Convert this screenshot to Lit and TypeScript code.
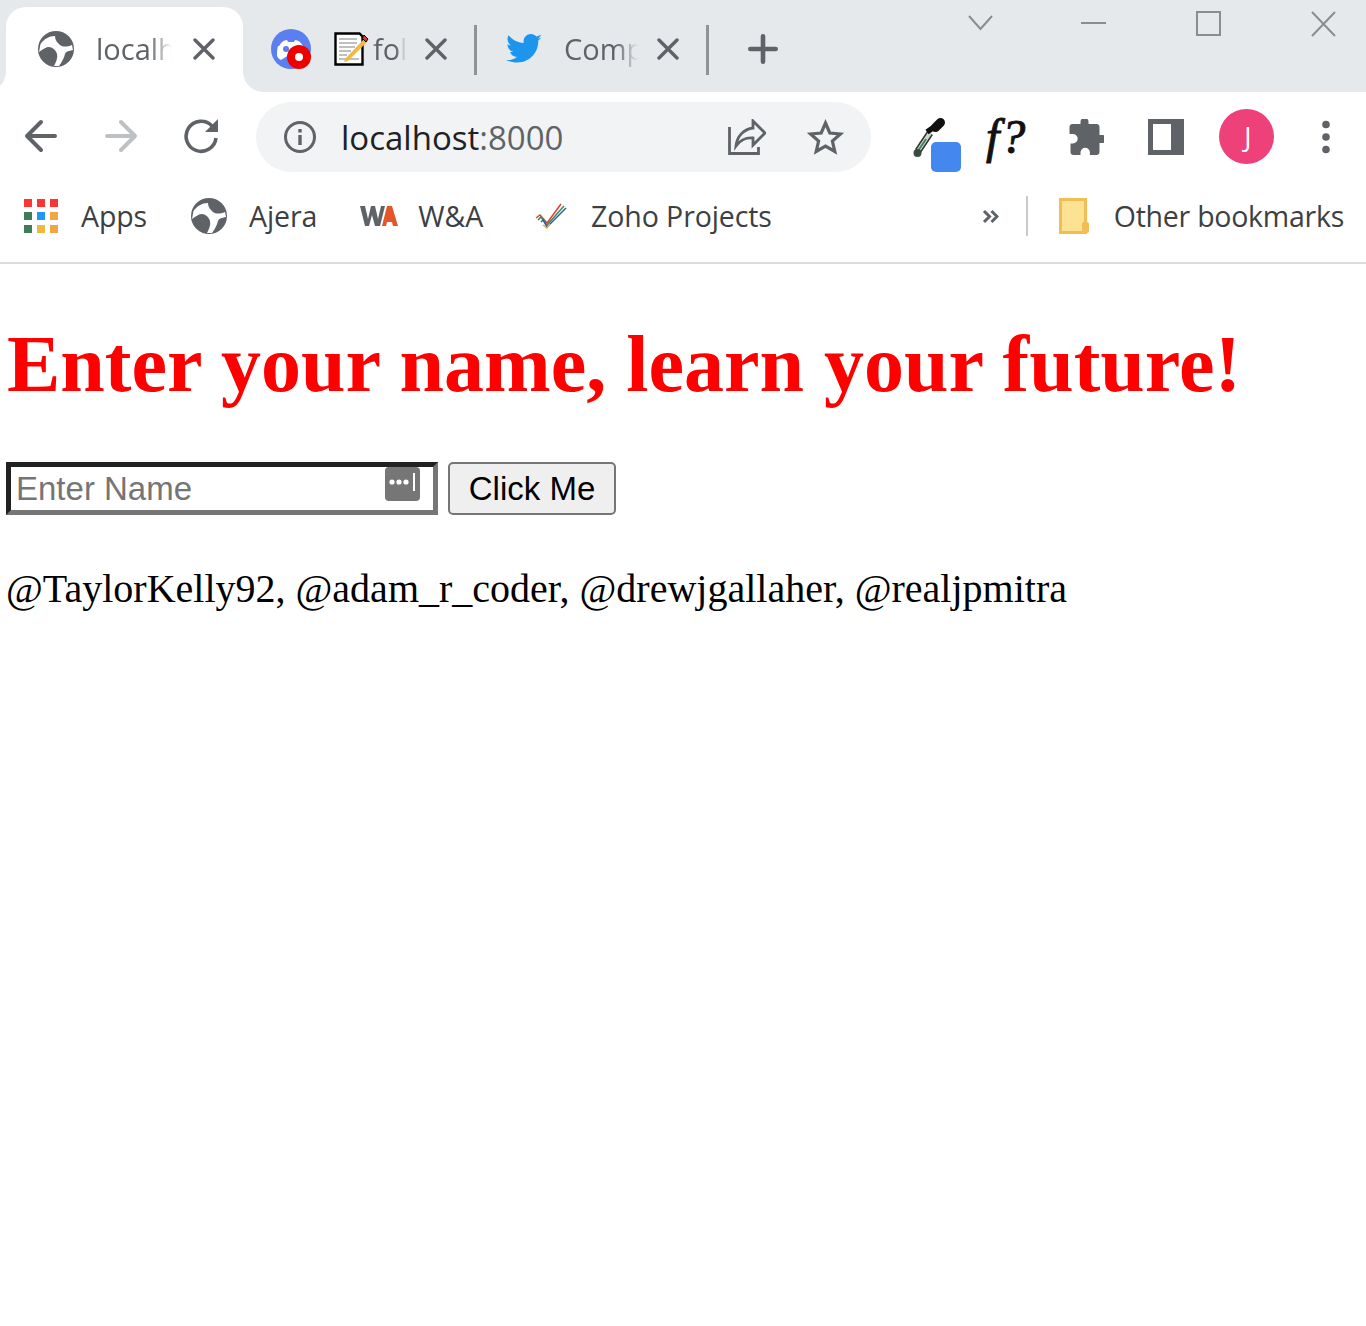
import { LitElement, css, html } from "lit";
import { customElement } from "lit/decorators.js";

const globe = html`<svg class="ico" width="36" height="36" viewBox="0 0 36 36">
  <circle cx="18" cy="18" r="18" fill="#5f6368" />
  <path fill="#fff" d="M2.500 13C6 8 11 5 17 5c0 4 2 6 5 9 3 2 7 2 12 0l1 5c-4 1-7 1-8 4-1 4-3 8-6 12h-5c2-4 4-8 3-12-1-4-5-7-8-7s-6 2-10 5z" />
</svg>`;

const closeX = html`<svg class="ico" width="22" height="22" viewBox="0 0 22 22">
  <path d="M2 2l18 18M20 2L2 20" stroke="#5f6368" stroke-width="3.4" stroke-linecap="round" />
</svg>`;

const appColors = ["#f33", "#f33", "#f33", "#3f7d58", "#2196f3", "#efa83f", "#3f7d58", "#efb93f", "#efa83f"];

@customElement("app-root")
export class AppRoot extends LitElement {
  static styles = css`
    :host {
      display: block;
      font-family: "Open Sans", "Noto Sans", sans-serif;
    }
    .ico {
      display: block;
      flex: none;
    }

    .tabstrip {
      display: flex;
      height: 92px;
      background: #e6e9ec;
      padding: 7px 0 0 6px;
      box-sizing: border-box;
    }
    .tab {
      display: flex;
      align-items: center;
      height: 85px;
      padding-bottom: 1px;
      box-sizing: border-box;
      font-size: 29px;
      color: #5f6368;
    }
    .tab.active {
      position: relative;
      width: 237px;
      padding-left: 32px;
      background: #fff;
      border-radius: 20px 20px 0 0;
    }
    .tab.active::before,
    .tab.active::after {
      content: "";
      position: absolute;
      bottom: 0;
      width: 20px;
      height: 20px;
    }
    .tab.active::before {
      left: -20px;
      background: radial-gradient(circle at 0 0, transparent 19.5px, #fff 20px);
    }
    .tab.active::after {
      right: -20px;
      background: radial-gradient(circle at 100% 0, transparent 19.5px, #fff 20px);
    }
    .title {
      overflow: hidden;
      white-space: nowrap;
      -webkit-mask-image: linear-gradient(to right, #000 70%, transparent);
      mask-image: linear-gradient(to right, #000 70%, transparent);
    }
    .tab.active .title {
      width: 76px;
      margin: -2px 21px 0 22px;
    }
    .tab.second {
      width: 231px;
      padding-left: 28px;
    }
    .tab.second .title {
      width: 33px;
      margin: -2px 19px 0 3px;
    }
    .tab.second .note {
      margin-left: 23px;
    }
    .sep {
      width: 3px;
      height: 50px;
      margin-top: 18px;
      background: #909396;
      flex: none;
    }
    .tab.third {
      width: 229px;
      padding-left: 29px;
    }
    .tab.third .title {
      width: 74px;
      margin: -2px 19px 0 22px;
    }
    .plus {
      margin: 27px 0 0 39px;
    }
    .winctl {
      display: flex;
      gap: 90px;
      margin: -3px 0 0 auto;
      padding-right: 30px;
      align-items: flex-start;
    }
    .winctl .chev {
      margin-right: -2px;
    }

    .toolbar {
      display: flex;
      align-items: center;
      height: 90px;
      padding-left: 23px;
      box-sizing: border-box;
    }
    .toolbar .nav {
      display: flex;
      gap: 44px;
      align-items: center;
      margin-top: -2px;
    }
    .omnibox {
      display: flex;
      align-items: center;
      width: 615px;
      height: 70px;
      margin-left: 37px;
      padding: 0 27px 0 28px;
      box-sizing: border-box;
      border-radius: 35px;
      background: #f1f3f4;
      flex: none;
    }
    .url {
      margin-left: 25px;
      font-size: 33px;
      color: #202124;
      flex: 1;
    }
    .url span {
      color: #5f6368;
    }
    .omni-icons {
      display: flex;
      gap: 41px;
      align-items: center;
    }
    .ext {
      display: flex;
      align-items: center;
      margin: -1px 0 0 42px;
    }
    .dropper {
      margin-top: 16px;
    }
    .fn {
      width: 44px;
      margin-left: 25px;
      font: italic 400 48px/1 "Liberation Serif", serif;
      letter-spacing: 2px;
      -webkit-text-stroke: 1px #111;
      color: #111;
      white-space: nowrap;
    }
    .puzzle {
      margin-left: 38px;
    }
    .panel {
      margin-left: 44px;
    }
    .avatar {
      width: 55px;
      height: 55px;
      margin-left: 35px;
      border-radius: 50%;
      background: #ee417a;
      color: #fff;
      font-size: 27px;
      text-indent: 3px;
      display: flex;
      align-items: center;
      justify-content: center;
    }
    .dots {
      margin-left: 47px;
    }

    .bookmarks {
      display: flex;
      align-items: center;
      height: 82px;
      padding: 0 0 12px 24px;
      box-sizing: border-box;
      border-bottom: 2px solid #dadce0;
      font-size: 28.5px;
      letter-spacing: -0.1px;
      color: #3c4043;
    }
    .bm {
      display: flex;
      align-items: center;
      white-space: nowrap;
    }
    .bm span {
      margin: -1px 0 0 24px;
    }
    .bm.apps-link span {
      margin-left: 23px;
    }
    .bm.ajera {
      margin-left: 44px;
    }
    .bm.ajera span {
      margin-left: 22px;
    }
    .bm.wa {
      margin-left: 42px;
    }
    .bm.wa span {
      margin-left: 19px;
    }
    .bm.zoho {
      margin-left: 52px;
    }
    .apps {
      display: grid;
      grid-template-columns: repeat(3, 8px);
      gap: 5px;
    }
    .apps i {
      display: block;
      width: 8px;
      height: 8px;
    }
    .more {
      margin-left: auto;
      padding-right: 22px;
    }
    .more span {
      margin-left: 25px;
      letter-spacing: -0.25px;
    }
    .bm-sep {
      width: 2px;
      height: 40px;
      margin: 0 31px 0 27px;
      background: #c8cbce;
    }

    .page {
      padding: 0 6px;
      font-family: "Liberation Serif", serif;
    }
    h1 {
      margin: 0;
      padding: 54px 0 0 1px;
      font-size: 80px;
      line-height: 92px;
      font-weight: 700;
      color: #f00;
      white-space: nowrap;
    }
    .form {
      display: flex;
      gap: 10px;
      margin-top: 52px;
      height: 53px;
    }
    .field {
      position: relative;
      width: 432px;
      height: 53px;
      box-sizing: border-box;
      border: 5px solid;
      border-color: #212121 #767676 #767676 #212121;
    }
    input {
      display: block;
      width: 100%;
      height: 100%;
      box-sizing: border-box;
      border: 0;
      outline: 0;
      padding: 0 5px;
      font: 33px "Liberation Sans", Arial, sans-serif;
      background: #fff;
    }
    input::placeholder {
      color: #757575;
      opacity: 1;
    }
    .pw {
      position: absolute;
      top: 0;
      right: 13px;
    }
    button {
      width: 168px;
      height: 53px;
      padding: 0;
      border: 2px solid #767676;
      border-radius: 5px;
      background: #efefef;
      color: #000;
      font: 33px "Liberation Sans", Arial, sans-serif;
    }
    .names {
      margin: 51px 0 0;
      font-size: 40px;
      line-height: 46px;
      color: #000;
      white-space: nowrap;
    }
  `;

  render() {
    return html`
      <div class="tabstrip">
        <div class="tab active">
          ${globe}
          <div class="title">localh</div>
          ${closeX}
        </div>
        <div class="tab second">
          <svg class="ico" width="40" height="40" viewBox="0 0 40 40">
            <circle cx="20" cy="20" r="20" fill="#5b7ff0" />
            <path fill="#fff" d="M8 17c2-4 5-6 8-6l1 2h6l1-2c3 0 6 2 8 6l-22 14c-2-1-3-2-4-4 0-4 0-7 1-10z" />
            <circle cx="15" cy="20" r="3" fill="#5b7ff0" />
            <circle cx="28" cy="28" r="12" fill="#e00" />
            <circle cx="28" cy="28" r="4" fill="#fff" />
          </svg>
          <svg class="ico note" width="36" height="34" viewBox="0 0 36 34">
            <path d="M1.500 1.500h24l3 3v28h-27z" fill="#fff" stroke="#000" stroke-width="2.400" />
            <path d="M5 7h18M5 11h18M5 15h16M5 19h12M5 23h8M5 27h20" stroke="#aaa" stroke-width="1.600" />
            <path d="M11 27l19-20 3 3-19 19-4 1z" fill="#f2b93f" />
            <path d="M30 3l4 4-2 3-4-4z" fill="#d33" stroke="#000" stroke-width="1" />
          </svg>
          <div class="title">fol</div>
          ${closeX}
        </div>
        <div class="sep"></div>
        <div class="tab third">
          <svg class="ico" width="36" height="30" viewBox="0 0 24 20">
            <path fill="#1d95ec" d="M24 2.400c-.9.4-1.800.7-2.800.8 1-.6 1.800-1.600 2.200-2.700-1 .6-2 1-3.100 1.200C19.300.7 18 0 16.600 0c-2.700 0-4.900 2.200-4.900 4.900 0 .4 0 .8.100 1.100C7.700 5.800 4.100 3.900 1.700.9c-.4.700-.7 1.600-.7 2.500 0 1.700.9 3.200 2.200 4.100-.8 0-1.600-.2-2.200-.6v.1c0 2.400 1.700 4.400 3.900 4.800-.4.100-.8.200-1.300.2-.3 0-.6 0-.9-.1.6 2 2.400 3.400 4.600 3.400-1.700 1.300-3.800 2.100-6.100 2.100-.4 0-.8 0-1.200-.1C2.200 18.200 4.800 19 7.500 19c9.100 0 14-7.500 14-14v-.6c1-.7 1.800-1.600 2.500-2z" />
          </svg>
          <div class="title">Comp</div>
          ${closeX}
        </div>
        <div class="sep"></div>
        <svg class="ico plus" width="30" height="30" viewBox="0 0 30 30">
          <path d="M15 2.300v25.400M2.300 15h25.400" stroke="#5f6368" stroke-width="4.600" stroke-linecap="round" />
        </svg>
        <div class="winctl">
          <svg class="ico chev" width="25" height="40" viewBox="0 0 25 40">
            <path d="M1 12l11.500 13L24 12" fill="none" stroke="#8a8c8e" stroke-width="2" />
          </svg>
          <svg class="ico" width="25" height="40" viewBox="0 0 25 40">
            <path d="M0 19h25" stroke="#8a8c8e" stroke-width="2" />
          </svg>
          <svg class="ico" width="25" height="40" viewBox="0 0 25 40">
            <path d="M1 8h23v23H1z" fill="none" stroke="#8a8c8e" stroke-width="2" />
          </svg>
          <svg class="ico" width="25" height="40" viewBox="0 0 25 40">
            <path d="M1 8l23 24M24 8L1 32" fill="none" stroke="#8a8c8e" stroke-width="2" />
          </svg>
        </div>
      </div>

      <div class="toolbar">
        <div class="nav">
          <svg class="ico" width="36" height="36" viewBox="0 0 36 36">
            <path d="M32 18H4M18 4L4 18l14 14" fill="none" stroke="#5f6368" stroke-width="4" stroke-linecap="round" stroke-linejoin="round" />
          </svg>
          <svg class="ico" width="36" height="36" viewBox="0 0 36 36">
            <path d="M4 18h28M18 4l14 14-14 14" fill="none" stroke="#bdc1c4" stroke-width="4" stroke-linecap="round" stroke-linejoin="round" />
          </svg>
          <svg class="ico" width="36" height="36" viewBox="0 0 36 36">
            <path d="M29 8A15 15 0 1 0 33 20" fill="none" stroke="#5f6368" stroke-width="3.600" />
            <path d="M35 1v13H22z" fill="#5f6368" />
          </svg>
        </div>
        <div class="omnibox">
          <svg class="ico" width="32" height="32" viewBox="0 0 32 32">
            <circle cx="16" cy="16" r="14.500" fill="none" stroke="#5f6368" stroke-width="3" />
            <path d="M14.300 14h3.400v10h-3.400zM14.300 8h3.400v3.400h-3.400z" fill="#5f6368" />
          </svg>
          <div class="url">localhost<span>:8000</span></div>
          <div class="omni-icons">
            <svg class="ico" width="38" height="36" viewBox="0 0 38 36">
              <path d="M1.500 8v26.500h29V28" fill="none" stroke="#5f6368" stroke-width="2.800" />
              <path d="M25 2l12 12-12 12v-7c-7-.5-12 1-17 8 1-10 8-17 17-18z" fill="none" stroke="#5f6368" stroke-width="2.800" />
            </svg>
            <svg class="ico" width="37" height="36" viewBox="0 0 37 36">
              <path d="M18.500 4l4.300 10 10.700 1-8.100 7 2.400 10.500-9.300-5.500-9.300 5.500 2.400-10.500-8.100-7 10.700-1z" fill="none" stroke="#5f6368" stroke-width="3.200" />
            </svg>
          </div>
        </div>
        <div class="ext">
          <svg class="ico dropper" width="48" height="54" viewBox="0 0 48 54">
            <path d="M5 33l12-18" stroke="#333" stroke-width="7" />
            <path d="M5 33l12-18" stroke="#cfd6d2" stroke-width="4" />
            <path d="M5 33l8-12" stroke="#3c8a5c" stroke-width="2" />
            <circle cx="4.500" cy="35" r="4" fill="#3a4a42" />
            <path d="M14 14l10-7" stroke="#111" stroke-width="5.500" />
            <path d="M22.500 9.500l5-5" stroke="#111" stroke-width="9" stroke-linecap="round" />
            <rect x="18" y="24" width="30" height="30" rx="5" fill="#4487ef" />
          </svg>
          <div class="fn">f?</div>
          <svg class="ico puzzle" width="36" height="36" viewBox="0 0 36 36">
            <path fill="#5f6368" d="M34.500 16h-3V8c0-1.700-1.300-3-3-3h-8V3a4 4 0 0 0-8 0v2h-8c-1.700 0-3 1.300-3 3v7H5a4.700 4.700 0 0 1 0 9.400H2.500V33c0 1.700 1.300 3 3 3h7v-2.500a4.700 4.700 0 0 1 9.400 0V36h6.600c1.700 0 3-1.300 3-3v-9h3a4 4 0 0 0 0-8z" />
          </svg>
          <svg class="ico panel" width="36" height="36" viewBox="0 0 36 36">
            <path fill-rule="evenodd" fill="#5f6368" d="M0 0h36v36H0zM5 5v26h18V5z" />
          </svg>
          <div class="avatar">J</div>
          <svg class="ico dots" width="10" height="34" viewBox="0 0 10 34">
            <circle cx="5" cy="4.500" r="3.800" fill="#5f6368" />
            <circle cx="5" cy="17" r="3.800" fill="#5f6368" />
            <circle cx="5" cy="29.500" r="3.800" fill="#5f6368" />
          </svg>
        </div>
      </div>

      <div class="bookmarks">
        <div class="bm apps-link">
          <div class="apps">${appColors.map((c) => html`<i style="background:${c}"></i>`)}</div>
          <span>Apps</span>
        </div>
        <div class="bm ajera">
          ${globe}
          <span>Ajera</span>
        </div>
        <div class="bm wa">
          <svg class="ico" width="40" height="22" viewBox="0 0 40 22">
            <path d="M1 1h5l3 13 3-13h4l3 13 3-13h4l-5 20h-5l-3-11-3 11H6z" fill="#5f6368" />
            <path d="M28 1h5l6 20h-5l-1-4h-5l-1 4h-4z" fill="#e2562a" />
          </svg>
          <span>W&amp;A</span>
        </div>
        <div class="bm zoho">
          <svg class="ico" width="32" height="26" viewBox="0 0 32 26">
            <path d="M1 15l4-3 7 8L26 1" fill="none" stroke="#e2402f" stroke-width="1.500" />
            <path d="M3 17l3-3 6 8L29 3" fill="none" stroke="#3c8a5c" stroke-width="1.500" />
            <path d="M6 19l2-2 4 7L31 5" fill="none" stroke="#2b62a8" stroke-width="1.500" />
            <path d="M8 22l4 3 3-4" fill="none" stroke="#efa83f" stroke-width="1.500" />
          </svg>
          <span>Zoho Projects</span>
        </div>
        <div class="bm more">
          <svg class="ico" width="17" height="15" viewBox="0 0 17 15">
            <path d="M2 2l5.500 5.500L2 13M9.500 2l5.500 5.500L9.500 13" fill="none" stroke="#5f6368" stroke-width="3" />
          </svg>
          <div class="bm-sep"></div>
          <svg class="ico" width="30" height="36" viewBox="0 0 30 36">
            <path d="M1.500 1.500h25v33h-25z" fill="#fde293" stroke="#f2bd55" stroke-width="3" />
            <rect x="23" y="24" width="7" height="11" rx="2" fill="#f2bd55" />
          </svg>
          <span>Other bookmarks</span>
        </div>
      </div>

      <div class="page">
        <h1>Enter your name, learn your future!</h1>
        <div class="form">
          <div class="field">
            <input placeholder="Enter Name" />
            <svg class="pw" width="35" height="34" viewBox="0 0 35 34">
              <rect width="35" height="34" rx="4" fill="#767676" />
              <circle cx="7" cy="15" r="2.600" fill="#fff" />
              <circle cx="14" cy="15" r="2.600" fill="#fff" />
              <circle cx="21" cy="15" r="2.600" fill="#fff" />
              <path d="M29 6v18" stroke="#fff" stroke-width="2" />
            </svg>
          </div>
          <button>Click Me</button>
        </div>
        <p class="names">@TaylorKelly92, @adam_r_coder, @drewjgallaher, @realjpmitra</p>
      </div>
    `;
  }
}
